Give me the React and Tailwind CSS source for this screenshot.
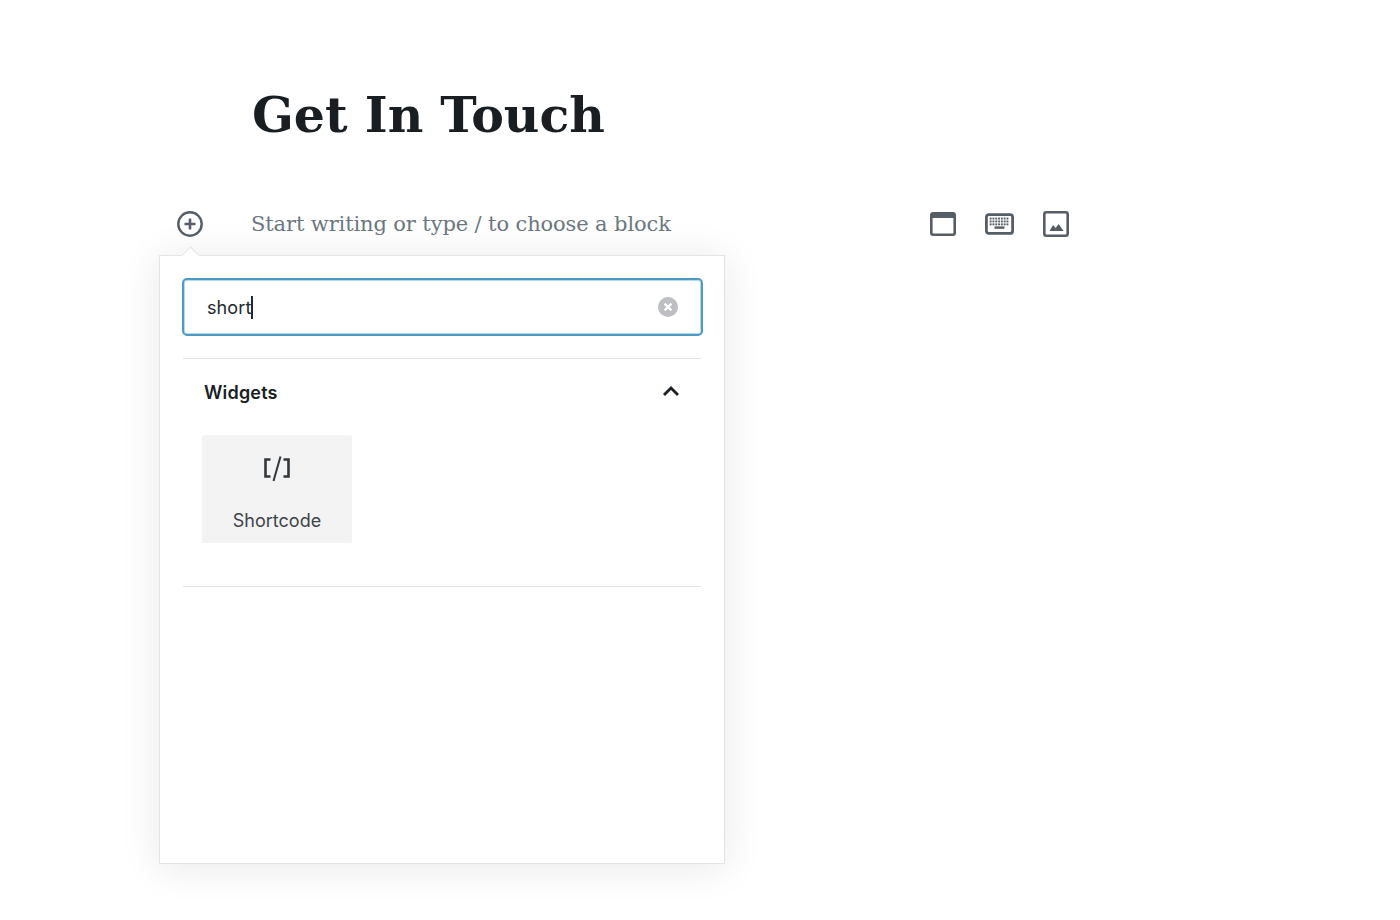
import React from "react";

const serif = "font-['DejaVu_Serif',serif]";
const sans = "font-['Inter',sans-serif]";

function PlusCircle() {
  return (
    <svg width="26" height="26" viewBox="0 0 26 26" fill="none" stroke="#555d66">
      <circle cx="13" cy="13" r="11.7" strokeWidth="2.4" />
      <path d="M13 7.5v11M7.5 13h11" strokeWidth="2.6" />
    </svg>
  );
}

function WindowIcon() {
  return (
    <svg width="26" height="24" viewBox="0 0 26 24" fill="none">
      <rect x="1.3" y="1.3" width="23.4" height="21.4" rx="2" stroke="#555d66" strokeWidth="2.6" />
      <rect x="1.3" y="1.3" width="23.4" height="4.7" fill="#555d66" />
    </svg>
  );
}

function KeyboardIcon() {
  const keys = [];
  for (let r = 0; r < 3; r++) {
    for (let c = 0; c < 7; c++) {
      keys.push(<rect key={r + "-" + c} x={4.7 + c * 2.8} y={4.6 + r * 2.9} width="1.9" height="1.9" fill="#555d66" />);
    }
  }
  return (
    <svg width="29" height="22" viewBox="0 0 29 22" fill="none">
      <rect x="1.4" y="1.6" width="26.2" height="18.8" rx="2.5" stroke="#555d66" strokeWidth="2.8" />
      {keys}
      <rect x="9.5" y="13.4" width="10" height="2.4" fill="#555d66" />
    </svg>
  );
}

function ImageIcon() {
  return (
    <svg width="26" height="26" viewBox="0 0 26 26" fill="none">
      <rect x="1.3" y="1.3" width="23.4" height="23.4" rx="2" stroke="#555d66" strokeWidth="2.6" />
      <path d="M6.5 20l3.5-6 2.6 3 3-4 5 7z" fill="#555d66" />
    </svg>
  );
}

function ClearIcon() {
  return (
    <svg width="20" height="20" viewBox="0 0 20 20">
      <circle cx="10" cy="10" r="10" fill="#bdbfc2" />
      <path d="M6.6 6.6l6.8 6.8M13.4 6.6l-6.8 6.8" stroke="#fff" strokeWidth="2.2" />
    </svg>
  );
}

function ChevronUp() {
  return (
    <svg width="18" height="12" viewBox="0 0 18 12" fill="none">
      <path d="M2 10l7-7 7 7" stroke="#191e23" strokeWidth="2.8" />
    </svg>
  );
}

function ShortcodeIcon() {
  return (
    <svg width="30" height="28" viewBox="0 0 30 28" fill="none" stroke="#32373c">
      <path d="M8.5 4.5H3.5v17h5" strokeWidth="2.6" />
      <path d="M21.5 4.5h5v17h-5" strokeWidth="2.6" />
      <path d="M18.5 1.5L11.5 26" strokeWidth="2" />
    </svg>
  );
}

export default function App() {
  return (
    <div className={`w-[1400px] h-[920px] bg-white overflow-hidden flex flex-col ${sans}`}>
      <h1 className={`ml-[252px] mt-[81px] h-[68px] leading-[68px] text-[49px] font-bold text-[#191e23] whitespace-nowrap ${serif}`}>
        Get In Touch
      </h1>

      <div className="mt-[61px] h-[28px] flex items-center ml-[177px]">
        <PlusCircle />
        <span className={`ml-[48px] w-[679px] pt-[2px] text-[21px] tracking-[-0.12px] text-[#6c7781] whitespace-nowrap ${serif}`}>
          Start writing or type / to choose a block
        </span>
        <div className="flex items-center">
          <WindowIcon />
          <div className="ml-[29px]"><KeyboardIcon /></div>
          <div className="ml-[29px]"><ImageIcon /></div>
        </div>
      </div>

      <div className="relative mt-[17px] ml-[159px] w-[566px] h-[609px] bg-white border border-[#e2e4e7] shadow-[0_3px_36px_rgba(25,30,35,0.1)] px-[22px] pt-[22px]">
        <div className="absolute -top-[7px] left-[24px] w-[13px] h-[13px] rotate-45 bg-white border-l border-t border-[#e2e4e7]" />

        <div className="relative h-[58px] -mr-[1px] border-2 border-[#4d9ac5] rounded-[5px] pl-[23px] pr-[23px] flex items-center justify-between bg-white shadow-[inset_0_0_0_1px_#b4d9ea]">
          <span className="text-[18px] tracking-[0.1px] text-[#23282d] flex items-center">
            short
            <span className="inline-block w-[2px] h-[23px] bg-[#23282d]" />
          </span>
          <ClearIcon />
        </div>

        <div className="mt-[22px] mx-[1px] border-t border-[#e2e4e7]" />

        <div className="h-[66px] flex items-center justify-between pl-[22px] pr-[22px]">
          <span className="text-[18px] tracking-[0.2px] font-semibold text-[#191e23]">Widgets</span>
          <div className="-mt-[2px]"><ChevronUp /></div>
        </div>

        <div className="ml-[20px] mt-[10px] w-[150px] h-[108px] bg-[#f3f3f4] rounded-[2px] flex flex-col items-center">
          <div className="mt-[20px] h-[28px]"><ShortcodeIcon /></div>
          <span className="mt-[24px] text-[18px] leading-[28px] text-[#3f444a]">Shortcode</span>
        </div>

        <div className="mt-[43px] mx-[1px] border-t border-[#e2e4e7]" />
      </div>
    </div>
  );
}
